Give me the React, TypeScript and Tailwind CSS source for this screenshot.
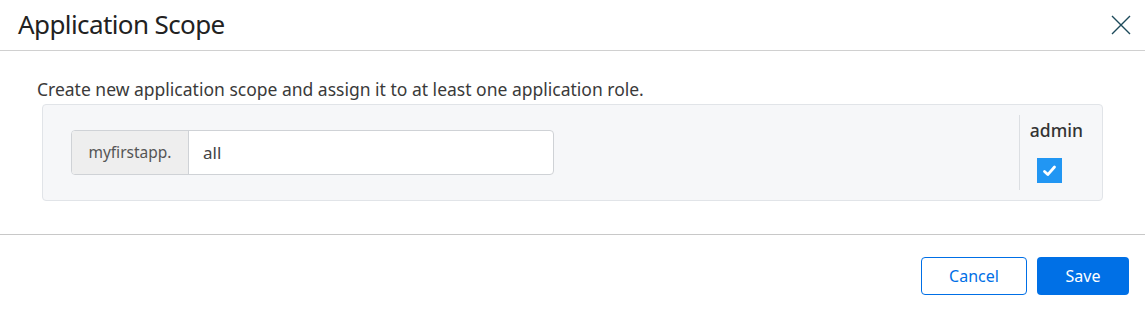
export default function App() {
  return (
    <div className="w-[1145px] h-[309px] bg-white text-[#333] font-['Noto_Sans',sans-serif]">
      <div className="h-[51px] flex items-center justify-between pl-[18px] pr-[13px] border-b border-[#d0d0d0]">
        <h1 className="text-[26px] tracking-[-0.6px] text-[#222] leading-none mt-[-2px]">Application Scope</h1>
        <button className="w-[22px] h-[22px] flex items-center justify-center text-[#1d4a5a]">
          <svg width="20" height="20" viewBox="0 0 20 20" fill="none" stroke="currentColor" strokeWidth="1.4">
            <path d="M1 1 L19 19 M19 1 L1 19" />
          </svg>
        </button>
      </div>
      <div className="h-[184px] border-b border-[#c8c8c8] pt-[27px] pl-[37px] pr-[42px]">
        <p className="text-[17.5px] leading-[22px] text-[#3a3a3a]">
          Create new application scope and assign it to at least one application role.
        </p>
        <div className="mt-[4px] ml-[5px] h-[97px] bg-[#f6f7f9] border border-[#e1e4e8] rounded-[4px] flex items-center justify-between pl-[28px] pr-[19px]">
          <div className="flex h-[45px] w-[483px] rounded-[4px] border border-[#cfd2d6] overflow-hidden bg-white">
            <span className="w-[117px] bg-[#eeeeee] border-r border-[#cfd2d6] flex items-center justify-center text-[15.5px] text-[#555]">
              myfirstapp.
            </span>
            <input
              className="flex-1 px-[14px] text-[17px] text-[#444] outline-none"
              defaultValue="all"
            />
          </div>
          <div className="h-[75px] border-l border-[#dcdfe3] pl-[10px] flex flex-col items-start">
            <span className="text-[17.5px] font-medium text-[#333] leading-[22px] mt-[4px]">admin</span>
            <span className="mt-[17px] ml-[7px] w-[25px] h-[25px] bg-[#2196f3]">
              <svg width="25" height="25" viewBox="0 0 25 25" fill="none" stroke="white" strokeWidth="2.8" strokeLinecap="round" strokeLinejoin="round">
                <path d="M7.5 13.5 L10.8 16.6 L17.5 9" />
              </svg>
            </span>
          </div>
        </div>
      </div>
      <div className="flex justify-end gap-[10px] pt-[22px] pr-[16px]">
        <button className="w-[106px] h-[38px] rounded-[4px] border border-[#006fe6] text-[#006fe6] text-[16px] bg-white">
          Cancel
        </button>
        <button className="w-[92px] h-[38px] rounded-[4px] bg-[#0070e6] text-white text-[16px]">
          Save
        </button>
      </div>
    </div>
  );
}
